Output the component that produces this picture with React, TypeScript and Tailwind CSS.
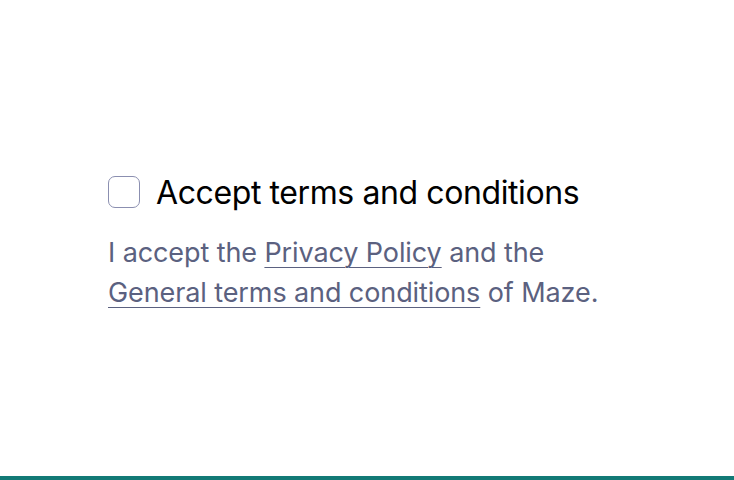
export default function App() {
  return (
    <div className="relative h-[480px] w-[734px] bg-white" style={{ fontFamily: 'Inter, "Noto Sans", sans-serif' }}>
      <div className="px-[108px] pt-[176px]">
        <label className="flex h-8 items-center gap-4">
          <span className="h-8 w-8 shrink-0 rounded-[7px] border border-[#8b8fb0] bg-white" />
          <span className="mt-[2px] text-[32px] leading-8 text-black tracking-[-0.4px]">Accept terms and conditions</span>
        </label>
        <p className="mt-[25px] w-[510px] text-[27px] leading-10 text-[#5b6180] tracking-[-0.1px]">
          I accept the{' '}
          <a className="underline decoration-1 underline-offset-[5px]">Privacy Policy</a> and the{' '}
          <a className="underline decoration-1 underline-offset-[5px]">General terms and conditions</a> of Maze.
        </p>
      </div>
      <div className="absolute bottom-0 left-0 h-1 w-full bg-[#127a76]" />
    </div>
  );
}
